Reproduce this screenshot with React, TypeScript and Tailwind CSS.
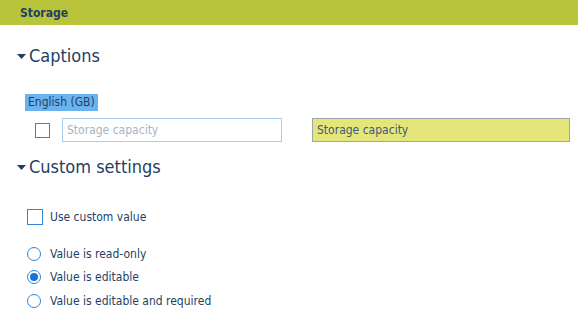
import React from 'react'

function Caret() {
  return (
    <svg width="9" height="5" viewBox="0 0 9 5" className="shrink-0">
      <path d="M0 0 H9 L4.5 5 Z" fill="#1f3f66" />
    </svg>
  )
}

function Radio({ checked, label }: { checked?: boolean; label: string }) {
  return (
    <div className="flex h-[23.5px] items-center gap-[9px]">
      <span className="flex h-[14px] w-[14px] items-center justify-center rounded-full border border-[#2e86d4] bg-white">
        {checked && <span className="h-[8px] w-[8px] rounded-full bg-[#1a73d1]" />}
      </span>
      <span className="text-[12px] text-[#1f3f66]">{label}</span>
    </div>
  )
}

export default function App() {
  return (
    <div
      className="h-[315px] w-[578px] overflow-hidden bg-white"
      style={{ fontFamily: '"DejaVu Sans Condensed", "DejaVu Sans", sans-serif' }}
    >
      <div className="flex h-[25px] items-center bg-[#b9c43a] pl-[20px]">
        <span className="text-[12px] font-bold text-[#1f3f66]">Storage</span>
      </div>

      <div className="pl-[17px] pt-[20px]">
        <div className="flex items-center gap-[3px]">
          <Caret />
          <span className="text-[18px] leading-[22px] text-[#1f3f66]">Captions</span>
        </div>
      </div>

      <div className="flex pl-[25px] pt-[27px]">
        <span className="h-[17px] bg-[#6ab3ee] px-[3px] text-[12px] leading-[17px] text-[#1f3f66]">
          English (GB)
        </span>
      </div>

      <div className="flex items-center pl-[35px] pt-[7px]">
        <span className="h-[15px] w-[15px] border border-[#2e86d4] bg-white" />
        <div className="ml-[12px] flex h-[24px] w-[220px] items-center border border-[#a9cdef] px-[4px] text-[12px] text-[#a7b3c2]">
          Storage capacity
        </div>
        <div className="ml-[30px] flex h-[24px] w-[258px] items-center border border-[#9ea6ad] bg-[#e4e67a] px-[4px] text-[12px] text-[#3f5a78]">
          Storage capacity
        </div>
      </div>

      <div className="pl-[17px] pt-[14px]">
        <div className="flex items-center gap-[3px]">
          <Caret />
          <span className="text-[18px] leading-[22px] text-[#1f3f66]">Custom settings</span>
        </div>
      </div>

      <div className="flex items-center gap-[7px] pl-[27px] pt-[30px]">
        <span className="h-[16px] w-[16px] border border-[#2e86d4] bg-white" />
        <span className="text-[12px] text-[#1f3f66]">Use custom value</span>
      </div>

      <div className="pl-[27px] pt-[16px]">
        <Radio label="Value is read-only" />
        <Radio checked label="Value is editable" />
        <Radio label="Value is editable and required" />
      </div>
    </div>
  )
}
